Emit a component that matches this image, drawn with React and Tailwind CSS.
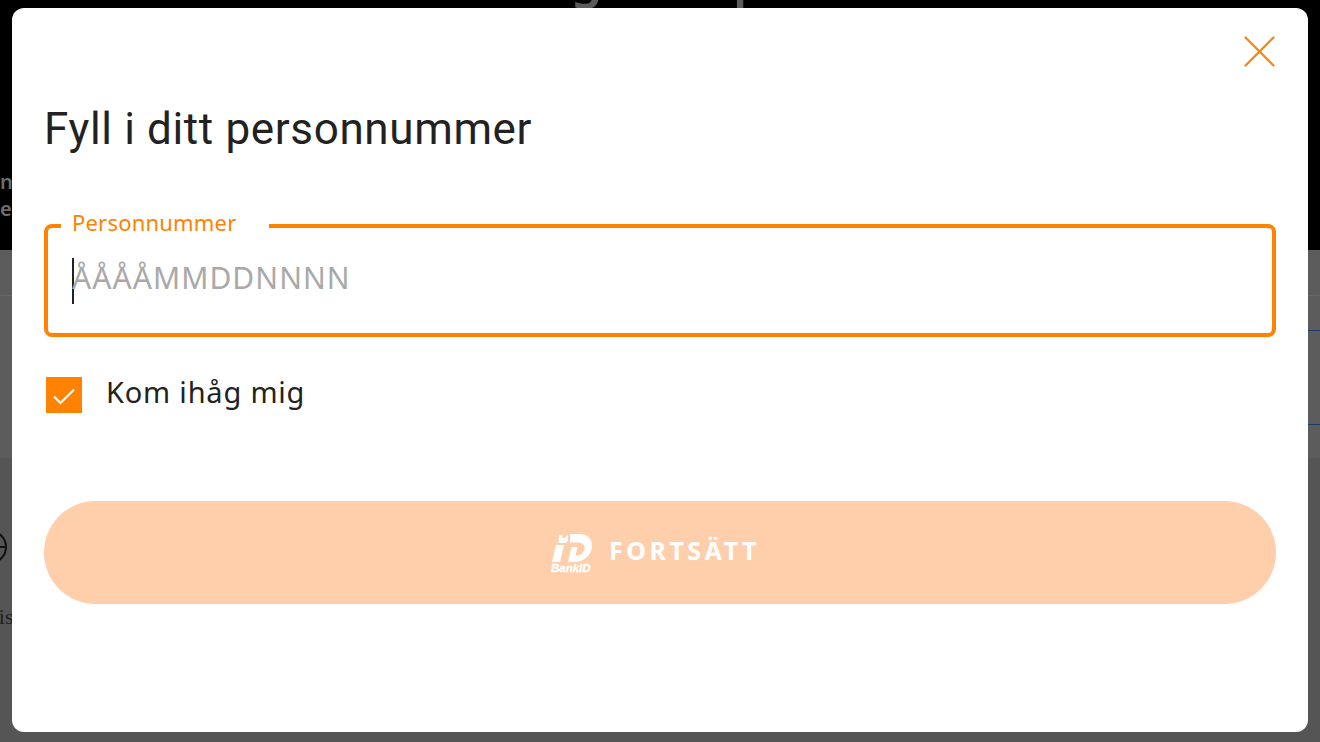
const sans = 'font-["Noto_Sans",sans-serif]'

function BankIdLogo() {
  return (
    <svg width="42" height="40" viewBox="0 0 42 40" fill="#fff">
      <path d="M8 2h3.500l-.5 3h3l2.500-3.500c1 3 .8 6-1 8.500h-4c-1 0-1.500 0-2.500 0h-1.500z" />
      <path d="M5 12h8l-4 17H1z" />
      <path d="M19 1h9c8 0 13 4.500 13 11.500C41 22 33 29 23 29h-6l3.500-15h6l-2 8.500h1c5 0 8-3.500 8-8 0-3-2.500-5-7-5h-8c1-3 1-5.500.500-8.500z" />
      <text x="0" y="38.500" fontSize="11.500" fontWeight="800" fontStyle="italic" stroke="#fff" strokeWidth="0.300" fontFamily="Liberation Sans, sans-serif">BankID</text>
    </svg>
  )
}

export default function App() {
  return (
    <div className={`relative w-[1320px] h-[742px] overflow-hidden bg-[#5c5c5c] ${sans}`}>
      {/* page behind the dialog */}
      <div className="flex flex-col h-full">
        <div className="h-[250px] bg-black overflow-hidden flex flex-col">
          <p className="h-[8px] overflow-hidden pl-[40px] text-[50px] leading-[50px] tracking-[0.1px] text-[#5c5c5c] whitespace-nowrap font-semibold">
            <span className="block -mt-[47px]">Surfa mer för en vanlig resa på</span>
          </p>
          <div className="pt-[160px] text-[20px] leading-[27px] font-semibold text-[#6d6d6d]">
            <p>n</p>
            <p>e</p>
          </div>
        </div>
        <div className="h-[46px] border-b border-[#666]" />
        <div className="h-[34px]" />
        <div className="h-[95px] w-[20px] self-end border-y border-[#1d3a66]" />
        <div className="h-[33px]" />
        <div className="flex-1 bg-[#555] pt-[72px] flex flex-col items-start">
          <svg width="8" height="34" viewBox="0 0 8 34" fill="none" stroke="#111" strokeWidth="2">
            <circle cx="-10" cy="17" r="16" />
            <path d="M-10 17H6" />
          </svg>
          <p className="-ml-[11px] pt-[36px] text-[22px] text-[#222] font-['Liberation_Serif',serif]">ais</p>
        </div>
      </div>

      {/* dialog */}
      <div className="absolute left-[12px] top-[8px] w-[1296px] h-[724px] rounded-xl bg-white pt-[93px] px-[32px] font-['Roboto',sans-serif]">
        <button className="absolute right-[17px] top-[13px] text-[#ff8200]">
          <svg width="62" height="62" viewBox="0 0 62 62" fill="none" stroke="currentColor" strokeWidth="2.200" strokeLinecap="round">
            <path d="M16.500 16.500 44.500 44.500M44.500 16.500 16.500 44.500" />
          </svg>
        </button>
        <h1 className="text-[44px] leading-[54px] text-[#222] font-normal tracking-[0.64px] pt-[1px] -mb-[1px]">
          Fyll i ditt personnummer
        </h1>

        <div className="relative mt-[69px] h-[113px] rounded-lg border-4 border-[#ff8200] flex items-center pl-[24px]">
          <span className="absolute left-[13px] -top-[20px] bg-white pl-[11px] pr-[33px] text-[22px] leading-[28px] tracking-[0.2px] text-[#ff8200] font-['Noto_Sans',sans-serif]">
            Personnummer
          </span>
          <span className="w-[2px] h-[46px] bg-[#222] -mr-[2px] mt-[0px]" />
          <span className="text-[30px] leading-[40px] text-[#a9a9a9] -mt-[6px] tracking-[1.05px] font-['Noto_Sans',sans-serif]">ÅÅÅÅMMDDNNNN</span>
        </div>

        <label className="pt-[40px] flex items-center gap-[24px] pl-[2px] font-['Noto_Sans',sans-serif]">
          <span className="w-[36px] h-[36px] bg-[#ff8200] flex items-center justify-center">
            <svg width="28" height="28" viewBox="0 0 28 28" fill="none" stroke="#fff" strokeWidth="2.200">
              <path d="M4 15.500 10.500 22 24 8.500" />
            </svg>
          </span>
          <span className="text-[29px] leading-[36px] text-[#222] -mt-[7px] tracking-[0.8px]">Kom ihåg mig</span>
        </label>

        <button className="mt-[88px] w-full h-[103px] rounded-[52px] bg-[#ffcfab] flex items-center justify-center gap-[16px] pr-[9px] font-['Noto_Sans',sans-serif]">
          <BankIdLogo />
          <span className="text-[25px] font-bold tracking-[3.500px] text-white -mt-[3px]">FORTSÄTT</span>
        </button>
      </div>
    </div>
  )
}
